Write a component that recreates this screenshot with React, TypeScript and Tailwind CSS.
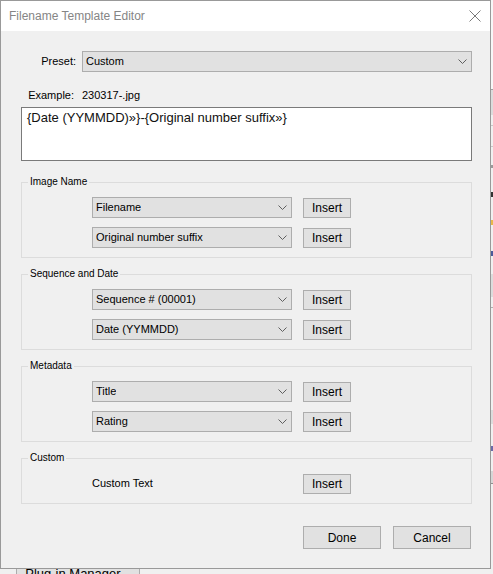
import React from 'react';

const Chevron = () => (
  <svg width="9" height="5" viewBox="0 0 9 5" className="shrink-0">
    <polyline points="0.5,0.5 4.5,4.5 8.5,0.5" fill="none" stroke="#5f5f5f" strokeWidth="1" />
  </svg>
);

const Combo: React.FC<{ value: string; className?: string }> = ({ value, className = '' }) => (
  <div
    className={`flex h-[21px] items-center justify-between border border-[#adadad] bg-[#e1e1e1] pl-[3px] pr-[4px] text-[11px] text-black ${className}`}
  >
    <span className="truncate">{value}</span>
    <Chevron />
  </div>
);

const InsertButton = () => (
  <button className="flex h-[20px] w-[48px] items-center justify-center border border-[#adadad] bg-[#e1e1e1] text-[12px] text-black">
    Insert
  </button>
);

const Group: React.FC<{ title: string; children: React.ReactNode }> = ({ title, children }) => (
  <fieldset className="border border-[#dcdcdc]">
    <legend className="ml-[6px] px-[2px] text-[10px] leading-[12px] text-black">{title}</legend>
    <div className="flex flex-col gap-[9px] pt-[9px] pb-[9px]">{children}</div>
  </fieldset>
);

const Row: React.FC<{ children: React.ReactNode }> = ({ children }) => (
  <div className="flex h-[21px] items-center gap-[11px] pl-[70px]">{children}</div>
);

// strip of the window behind the dialog, seen at the right edge
const backdrop = [
  { h: 'h-[89px]', c: 'bg-[#f7f7f7]' },
  { h: 'h-[1px]', c: 'bg-[#a0a0a0]' },
  { h: 'h-[25px]', c: 'bg-[#dcdcdc]' },
  { h: 'h-[10px]', c: 'bg-[#f0f0f0]' },
  { h: 'h-[1px]', c: 'bg-[#c8c8c8]' },
  { h: 'h-[20px]', c: 'bg-[#f0f0f0]' },
  { h: 'h-[1px]', c: 'bg-[#c8c8c8]' },
  { h: 'h-[18px]', c: 'bg-[#f0f0f0]' },
  { h: 'h-[3px]', c: 'bg-[#9a9a9a]' },
  { h: 'h-[24px]', c: 'bg-[#f0f0f0]' },
  { h: 'h-[5px]', c: 'bg-[#333333]' },
  { h: 'h-[23px]', c: 'bg-[#f0f0f0]' },
  { h: 'h-[5px]', c: 'bg-[#e8b84a]' },
  { h: 'h-[26px]', c: 'bg-[#f0f0f0]' },
  { h: 'h-[5px]', c: 'bg-[#4a5a9a]' },
  { h: 'h-[18px]', c: 'bg-[#f0f0f0]' },
  { h: 'h-[23px]', c: 'bg-[#dcdcdc]' },
  { h: 'h-[10px]', c: 'bg-[#f0f0f0]' },
  { h: 'h-[1px]', c: 'bg-[#b0b0b0]' },
  { h: 'h-[102px]', c: 'bg-[#f0f0f0]' },
  { h: 'h-[14px]', c: 'bg-[#dcdcdc]' },
  { h: 'h-[22px]', c: 'bg-[#f0f0f0]' },
  { h: 'h-[5px]', c: 'bg-[#6a6aa8]' },
  { h: 'h-[20px]', c: 'bg-[#f0f0f0]' },
  { h: 'h-[12px]', c: 'bg-[#d6d6d6]' },
  { h: 'h-[1px]', c: 'bg-[#909090]' },
];

const App: React.FC = () => {
  return (
    <div className="relative h-[574px] w-[493px] overflow-hidden bg-[#f0f0f0] font-['Liberation_Sans',Arial,sans-serif]">
      {/* Window behind the dialog */}
      <div className="flex h-full">
        <div className="w-[491px] pt-[561px] pl-[16px]">
          <div className="flex h-[26px] w-[124px] items-center justify-center border border-[#adadad] bg-[#e1e1e1] text-[13px] text-black">
            Plug-in Manager...
          </div>
        </div>
        <div className="flex w-[2px] flex-col">
          {backdrop.map((b, i) => (
            <div key={i} className={`${b.h} ${b.c} shrink-0`} />
          ))}
        </div>
      </div>

      {/* Dialog window */}
      <div className="absolute top-0 left-0 flex h-[569px] w-[491px] flex-col border border-[#999999] bg-[#f0f0f0]">
        <div className="flex h-[30px] shrink-0 items-center justify-between bg-white pl-[8px] pr-[9px]">
          <span className="text-[12px] text-[#858585]">Filename Template Editor</span>
          <svg width="12" height="12" viewBox="0 0 12 12">
            <path d="M0.5 0.5 L11.5 11.5 M11.5 0.5 L0.5 11.5" stroke="#7a7a7a" strokeWidth="1" fill="none" />
          </svg>
        </div>

        <div className="flex flex-col pt-[20px] pr-[18px] pl-[20px]">
          <div className="flex h-[21px] items-center">
            <span className="w-[55px] text-right text-[11px] text-black">Preset:</span>
            <Combo value="Custom" className="ml-[6px] flex-1" />
          </div>

          <div className="mt-[16px] flex h-[14px] items-center text-[11px] text-black">
            <span className="w-[53px] text-right">Example:</span>
            <span className="ml-[8px]">230317-.jpg</span>
          </div>

          <textarea
            readOnly
            defaultValue="{Date (YYMMDD)»}-{Original number suffix»}"
            className="mt-[5px] h-[54px] w-full resize-none border border-[#7a7a7a] bg-white px-[5px] pt-[2px] text-[13px] leading-[16px] text-[#111111] outline-none"
          />

          <div className="mt-[15px]">
            <Group title="Image Name">
              <Row>
                <Combo value="Filename" className="w-[200px]" />
                <InsertButton />
              </Row>
              <Row>
                <Combo value="Original number suffix" className="w-[200px]" />
                <InsertButton />
              </Row>
            </Group>
          </div>

          <div className="mt-[10px]">
            <Group title="Sequence and Date">
              <Row>
                <Combo value="Sequence # (00001)" className="w-[200px]" />
                <InsertButton />
              </Row>
              <Row>
                <Combo value="Date (YYMMDD)" className="w-[200px]" />
                <InsertButton />
              </Row>
            </Group>
          </div>

          <div className="mt-[10px]">
            <Group title="Metadata">
              <Row>
                <Combo value="Title" className="w-[200px]" />
                <InsertButton />
              </Row>
              <Row>
                <Combo value="Rating" className="w-[200px]" />
                <InsertButton />
              </Row>
            </Group>
          </div>

          <div className="mt-[10px]">
            <Group title="Custom">
              <Row>
                <span className="w-[200px] text-[11px] text-black">Custom Text</span>
                <InsertButton />
              </Row>
            </Group>
          </div>

          <div className="mt-[22px] flex justify-end gap-[12px] pr-[1px]">
            <button className="h-[23px] w-[78px] border border-[#adadad] bg-[#e1e1e1] text-[12px] text-black">
              Done
            </button>
            <button className="h-[23px] w-[78px] border border-[#adadad] bg-[#e1e1e1] text-[12px] text-black">
              Cancel
            </button>
          </div>
        </div>
      </div>
    </div>
  );
};

export default App;
